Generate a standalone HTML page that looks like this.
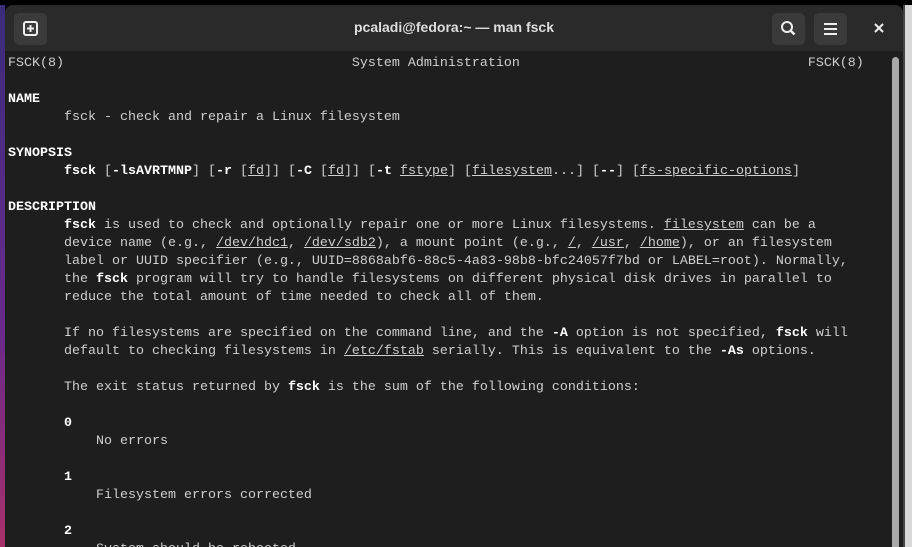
<!DOCTYPE html>
<html><head><style>
html,body{margin:0;padding:0;width:912px;height:547px;overflow:hidden;background:#000;}
.lp{position:absolute;left:0;top:5px;width:5px;height:542px;background:linear-gradient(#3a2d7a,#6a2a8a 60%,#a8306a);}
.rp{position:absolute;left:903px;top:5px;width:9px;height:542px;background:#d8d8d8;border-left:2px solid #444;}
.win{position:absolute;left:5px;top:5px;width:898px;height:542px;background:#1e1e1e;border-radius:8px 8px 0 0;overflow:hidden;}
.hdr{position:absolute;left:0;top:0;width:898px;height:46px;background:#2a2a2a;}
.btn{position:absolute;top:8px;width:33px;height:32px;background:#3a3a3a;border-radius:5px;}
.title{position:absolute;left:0;width:898px;top:14px;text-align:center;font:bold 14px "Liberation Sans",sans-serif;color:#dedede;}
.term{position:absolute;left:3px;top:50px;font:13.33px/18px "Liberation Mono",monospace;color:#cfcfcf;white-space:pre;}
b{color:#fff;}
u{text-decoration:underline;}
.sb{position:absolute;left:887px;top:52px;width:7px;height:500px;background:#a8a8a8;border-radius:4px;}
</style></head><body>
<div class="lp"></div><div class="rp"></div>
<div class="win">
<div class="hdr">
<div class="btn" style="left:9px"><svg width="33" height="32"><rect x="10" y="9" width="13" height="13" rx="2" fill="none" stroke="#eee" stroke-width="2"/><path d="M16.5 12v7M13 15.5h7" stroke="#eee" stroke-width="2"/></svg></div>
<div class="title">pcaladi@fedora:~ — man fsck</div>
<div class="btn" style="left:767px"><svg width="33" height="32"><circle cx="15" cy="14" r="5" fill="none" stroke="#eee" stroke-width="2"/><path d="M18.5 17.5l4 4" stroke="#eee" stroke-width="2.4"/></svg></div>
<div class="btn" style="left:809px"><svg width="33" height="32"><path d="M10 11h13M10 16h13M10 21h13" stroke="#eee" stroke-width="2"/></svg></div>
<svg style="position:absolute;left:867px;top:16px" width="14" height="14"><path d="M3 3l8 8M11 3l-8 8" stroke="#eee" stroke-width="2"/></svg>
</div>
<div class="sb"></div>
<div class="term">FSCK(8)                                    System Administration                                    FSCK(8)

<b>NAME</b>
       fsck - check and repair a Linux filesystem

<b>SYNOPSIS</b>
       <b>fsck</b> [<b>-lsAVRTMNP</b>] [<b>-r</b> [<u>fd</u>]] [<b>-C</b> [<u>fd</u>]] [<b>-t</b> <u>fstype</u>] [<u>filesystem</u>...] [<b>--</b>] [<u>fs-specific-options</u>]

<b>DESCRIPTION</b>
       <b>fsck</b> is used to check and optionally repair one or more Linux filesystems. <u>filesystem</u> can be a
       device name (e.g., <u>/dev/hdc1</u>, <u>/dev/sdb2</u>), a mount point (e.g., <u>/</u>, <u>/usr</u>, <u>/home</u>), or an filesystem
       label or UUID specifier (e.g., UUID=8868abf6-88c5-4a83-98b8-bfc24057f7bd or LABEL=root). Normally,
       the <b>fsck</b> program will try to handle filesystems on different physical disk drives in parallel to
       reduce the total amount of time needed to check all of them.

       If no filesystems are specified on the command line, and the <b>-A</b> option is not specified, <b>fsck</b> will
       default to checking filesystems in <u>/etc/fstab</u> serially. This is equivalent to the <b>-As</b> options.

       The exit status returned by <b>fsck</b> is the sum of the following conditions:

       <b>0</b>
           No errors

       <b>1</b>
           Filesystem errors corrected

       <b>2</b>
           System should be rebooted
</div>
</div>
</body></html>
